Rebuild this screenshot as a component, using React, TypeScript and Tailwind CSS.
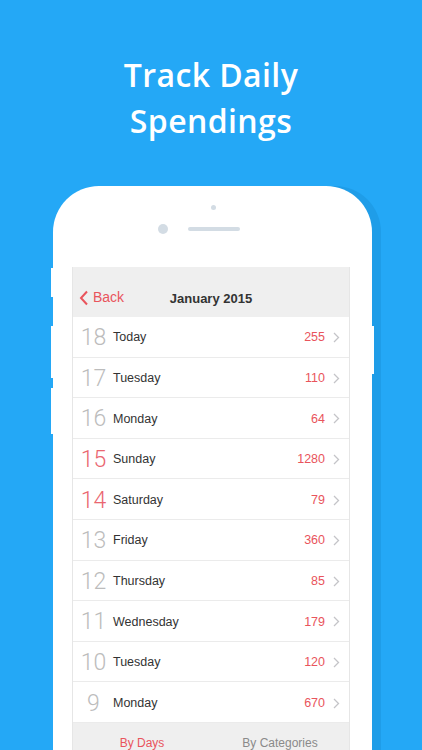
import React from "react";

const rows = [
  { d: "18", name: "Today", amt: "255", red: false },
  { d: "17", name: "Tuesday", amt: "110", red: false },
  { d: "16", name: "Monday", amt: "64", red: false },
  { d: "15", name: "Sunday", amt: "1280", red: true },
  { d: "14", name: "Saturday", amt: "79", red: true },
  { d: "13", name: "Friday", amt: "360", red: false },
  { d: "12", name: "Thursday", amt: "85", red: false },
  { d: "11", name: "Wednesday", amt: "179", red: false },
  { d: "10", name: "Tuesday", amt: "120", red: false },
  { d: "9", name: "Monday", amt: "670", red: false },
];

function Chevron({ className }: { className?: string }) {
  return (
    <svg width="7" height="11" viewBox="0 0 7 11" className={className}>
      <path d="M1 1 L5.5 5.5 L1 10" fill="none" stroke="currentColor" strokeWidth="1.3" />
    </svg>
  );
}

export default function App() {
  return (
    <div className="w-[422px] h-[750px] overflow-hidden bg-[#24a8f6] flex flex-col items-center">
      <h1
        className="mt-[52px] text-white text-center text-[32px] leading-[46px] font-semibold tracking-[0.4px]"
        style={{ fontFamily: '"Open Sans", sans-serif' }}
      >
        Track Daily
        <br />
        Spendings
      </h1>
      <div className="relative mt-[42px] w-[319px] h-[600px] self-start ml-[53px] rounded-t-[46px] bg-white shadow-[9px_0_0_#1f9de8]">
        {/* side buttons */}
        <div className="absolute left-[-2px] top-[82px] w-[2px] h-[29px] bg-white" />
        <div className="absolute left-[-2px] top-[140px] w-[2px] h-[52px] bg-white" />
        <div className="absolute left-[-2px] top-[202px] w-[2px] h-[46px] bg-white" />
        <div className="absolute right-[-2px] top-[140px] w-[2px] h-[48px] bg-white" />

        <div className="h-[81px] flex flex-col items-center">
          <div className="mt-[19px] w-[5px] h-[5px] rounded-full bg-[#d3dce4] ml-[2px]" />
          <div className="mt-[14px] flex items-center ml-[-28px]">
            <div className="w-[10px] h-[10px] rounded-full bg-[#d3dce4]" />
            <div className="ml-[20px] w-[52px] h-[4px] rounded-full bg-[#d3dce4]" />
          </div>
        </div>

        <div
          className="ml-[19px] w-[278px] border-x border-[#e6e6e6]"
          style={{ fontFamily: '"Liberation Sans", Arial, sans-serif' }}
        >
          <div className="relative h-[50px] bg-[#efefef] flex items-end pb-[9px]">
            <div className="flex items-center text-[#e9545c] pl-[6px]">
              <svg width="10" height="16" viewBox="0 0 10 16">
                <path d="M8 1.5 L2 8 L8 14.5" fill="none" stroke="currentColor" strokeWidth="2" />
              </svg>
              <span className="ml-[4px] text-[14px]">Back</span>
            </div>
            <div className="absolute left-0 right-0 bottom-[9px] text-center text-[13px] font-bold text-[#333]">
              January 2015
            </div>
          </div>
          {rows.map((r, i) => (
            <div key={i} className="h-[40.6px] flex items-center pt-[2px] border-b border-[#ebebeb] bg-white">
              <div
                className={`w-[31px] ml-[5px] text-center text-[23px] font-light leading-none ${
                  r.red ? "text-[#ea6670]" : "text-[#bcbcbc]"
                }`}
                style={{ fontFamily: 'Roboto, sans-serif' }}
              >
                {r.d}
              </div>
              <div className="ml-[4px] text-[12.5px] text-[#333]">{r.name}</div>
              <div className="ml-auto text-[12.5px] text-[#e9545c]">{r.amt}</div>
              <Chevron className="ml-[8px] mr-[9px] text-[#c4c4c8]" />
            </div>
          ))}
          <div className="h-[40px] bg-[#efefef] flex items-start pt-[11px] text-[12px]">
            <div className="flex-1 text-center text-[#e9545c]">By Days</div>
            <div className="flex-1 text-center text-[#8a8a8a]">By Categories</div>
          </div>
        </div>
      </div>
    </div>
  );
}
